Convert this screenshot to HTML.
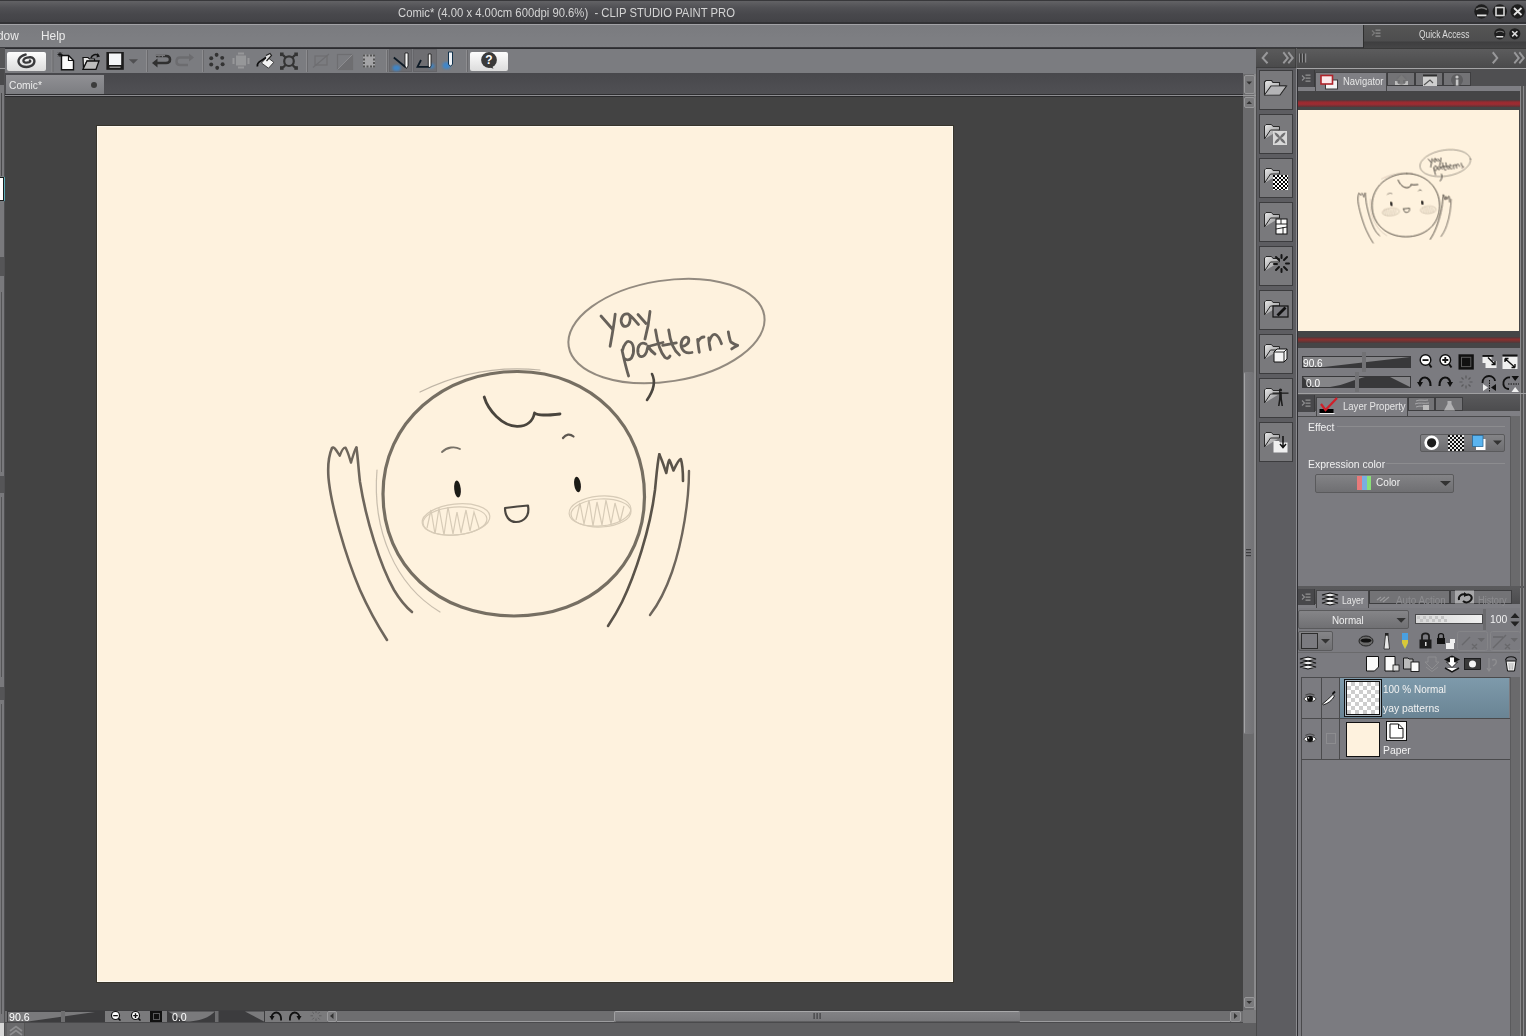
<!DOCTYPE html>
<html><head><meta charset="utf-8">
<style>
*{margin:0;padding:0;box-sizing:border-box}
html,body{width:1526px;height:1036px;overflow:hidden;background:#5e5e60;font-family:"Liberation Sans",sans-serif;position:relative}
.a{position:absolute}
.t{position:absolute;white-space:nowrap;line-height:1;transform-origin:0 0}
#title{left:0;top:0;width:1526px;height:24px;background:linear-gradient(#38383b 0,#38383b 1px,#626265 1px,#505054 8px,#48484c 14px,#434347 22px,#333336 22px)}
#menu{left:0;top:24px;width:1526px;height:24px;background:linear-gradient(#7a7b7f,#7f8084);border-top:1px solid #a2a2a6;border-bottom:1px solid #3a3a3e}
#tool{left:5px;top:48px;width:1251px;height:26px;background:#7b7c80;border-top:1px solid #2c2c30}
#tabrow{left:5px;top:73px;width:1238px;height:24px;background:linear-gradient(#48484c 0,#505054 21px,#2e2e30 21px,#2e2e30 22px,#8e8e92 22px,#8e8e92 23px,#2a2a2c 23px)}
#canvas{left:5px;top:97px;width:1238px;height:913px;background:#434343}
#paper{left:97px;top:126px;width:856px;height:856px;background:#fef2de;box-shadow:inset 1px 1px 0 #fffaf0,inset -1px -1px 0 #fffaf0,0 0 0 1px #38352c}
#leftstrip{left:0;top:48px;width:5px;height:988px;background:#79797c;border-right:1px solid #505052}
#vscroll{left:1243px;top:74px;width:13px;height:949px;background:#717173}
#hbar{left:5px;top:1010px;width:1251px;height:13px;background:#6a6a6c}
#bot{left:5px;top:1023px;width:1251px;height:13px;background:#5e5e60}
#col{left:1256px;top:48px;width:41px;height:988px;background:#5d5d61;border-left:1px solid #4a4a4b}
#rpanel{left:1296px;top:48px;width:230px;height:988px;background:#7b7b80;box-shadow:inset 1px 0 0 #8a8a8e,inset 2px 0 0 #2e2e32}
#qa{left:1363px;top:25px;width:163px;height:23px;background:linear-gradient(#555 0,#4d4d4e 16px,#3e3e3f 17px,#454546 23px);border-left:1px solid #2e2e2e}
.btn{background:linear-gradient(#fdfdfd,#e9e9e9 60%,#dcdcdc);border-radius:2px}
</style></head><body>
<div id="title" class="a"></div>
<div class="t" style="left:398px;top:7.2px;font-size:12.7px;color:#d4d4d4;transform:scaleX(0.89)">Comic* (4.00 x 4.00cm 600dpi 90.6%)&nbsp; - CLIP STUDIO PAINT PRO</div>
<div id="menu" class="a"></div>
<div class="t" style="left:-2.7px;top:29px;font-size:13px;color:#eaeaea;transform:scaleX(0.914)">dow</div>
<div class="t" style="left:40.5px;top:29px;font-size:13px;color:#eaeaea;transform:scaleX(0.914)">Help</div>
<div id="qa" class="a"></div>
<div class="t" style="left:1419px;top:30px;font-size:10px;color:#dcdcdc;transform:scaleX(0.84)">Quick Access</div>
<div id="leftstrip" class="a"></div>
<div class="a" style="left:0;top:48px;width:5px;height:20px;background:#555557"></div>
<div class="a" style="left:0;top:68px;width:5px;height:1px;background:#9a9a9c"></div>
<div class="a" style="left:0;top:69px;width:4px;height:16px;background:#4a4a4c"></div>
<div class="a" style="left:1px;top:93px;width:1px;height:83px;background:#4a4a4c"></div>
<div class="a" style="left:0;top:177px;width:4px;height:24px;background:#fff;border:1px solid #1a1a1a;border-left:none;box-shadow:1px 0 1px #5ab4c0"></div>
<div class="a" style="left:0;top:257px;width:4px;height:19px;background:#555557"></div>
<div class="a" style="left:1px;top:292px;width:1px;height:180px;background:#555557"></div>
<div class="a" style="left:0;top:476px;width:4px;height:17px;background:#555557"></div>
<div class="a" style="left:1px;top:497px;width:1px;height:180px;background:#555557"></div>
<div class="a" style="left:0;top:687px;width:4px;height:13px;background:#555557"></div>
<div class="a" style="left:1px;top:704px;width:1px;height:310px;background:#555557"></div>
<div class="a" style="left:0;top:1023px;width:4px;height:13px;background:#d8d8d8"></div>

<div id="tool" class="a"></div>
<div class="a btn" style="left:7px;top:52px;width:39px;height:19px"></div>
<div class="a btn" style="left:470px;top:52px;width:38px;height:19px"></div>
<div class="a" style="left:389px;top:49px;width:23px;height:23px;background:#6e6e72;border:1px solid #66666a"></div>
<div class="a" style="left:413px;top:49px;width:24px;height:23px;background:#6e6e72;border:1px solid #66666a"></div>
<div id="tabrow" class="a"></div>
<div id="canvas" class="a"></div>
<!-- tab -->
<div class="a" style="left:6px;top:75px;width:98px;height:19px;background:linear-gradient(#909094,#7c7d81)"></div>
<div class="t" style="left:9px;top:80px;font-size:11px;color:#ececec;transform:scaleX(0.93)">Comic*</div>
<div class="a" style="left:91px;top:81.5px;width:6px;height:6px;border-radius:50%;background:#3c3c3c"></div>

<div id="paper" class="a"></div>




<!-- bottom status bar -->
<div class="a" style="left:5px;top:1010px;width:1238px;height:13px;background:#6e6e70;border-top:1px solid #3e3e40;border-bottom:1px solid #4a4a4c"></div>
<div class="a" style="left:337px;top:1021px;width:277px;height:1px;background:#9c9c9e"></div>
<div class="a" style="left:1020px;top:1021px;width:210px;height:1px;background:#9c9c9e"></div>
<div class="a" style="left:614px;top:1011px;width:406px;height:11px;background:linear-gradient(#a8a8aa 0,#a8a8aa 1px,#828285 1px,#78787b 10px,#5e5e60 10px);border-left:1px solid #a0a0a2;border-radius:2px"></div>
<div class="a" style="left:7px;top:1011px;width:98px;height:11px;background:#3c3c3e"></div>
<div class="a" style="left:105px;top:1011px;width:45px;height:11px;background:#7a7a7c"></div>
<div class="a" style="left:150px;top:1011px;width:12px;height:11px;background:#111"></div>
<div class="a" style="left:153px;top:1013px;width:7px;height:7px;border:1px solid #5a5a5c"></div>
<div class="a" style="left:162px;top:1011px;width:5px;height:11px;background:#7a7a7c"></div>
<div class="a" style="left:167px;top:1011px;width:98px;height:11px;background:#3c3c3e"></div>
<div class="a" style="left:265px;top:1011px;width:62px;height:11px;background:#7a7a7c"></div>
<div class="a" style="left:327px;top:1011px;width:10px;height:11px;background:#7e7e80;border:1px solid #9a9a9c;border-radius:2px"></div>
<div class="a" style="left:1230px;top:1011px;width:11px;height:11px;background:#7e7e80;border:1px solid #9a9a9c;border-radius:2px"></div>
<div class="a" style="left:1243px;top:1010px;width:13px;height:13px;background:#7a7a7c"></div>
<div class="a" style="left:5px;top:1023px;width:1251px;height:13px;background:#5f5f61"></div>
<div class="a" style="left:7px;top:1023px;width:18px;height:13px;background:#6a6a6c;border-right:1px solid #555"></div>
<!-- vertical scrollbar -->
<div class="a" style="left:1243px;top:74px;width:13px;height:936px;background:#6b6b6d;border-right:2px solid #8a8a8c"></div>
<div class="a" style="left:1243px;top:95px;width:13px;height:1px;background:#9a9a9c"></div>
<div class="a" style="left:1244px;top:75px;width:11px;height:19px;background:#7a7a7c;border:1px solid #98989a;border-radius:2px"></div>
<div class="a" style="left:1244px;top:97px;width:11px;height:11px;background:#7a7a7c;border:1px solid #98989a;border-radius:2px"></div>
<div class="a" style="left:1244px;top:997px;width:11px;height:11px;background:#7a7a7c;border:1px solid #98989a;border-radius:2px"></div>
<div class="a" style="left:1244px;top:372px;width:10px;height:362px;background:linear-gradient(90deg,#a4a4a6 0,#a4a4a6 1px,#7c7c7f 1px,#747477 9px);border-radius:2px"></div>
<div class="a" style="left:1256px;top:74px;width:1px;height:962px;background:#3a3a3c"></div>
<div id="col" class="a"></div>
<div id="rpanel" class="a"></div>
<!-- right icon column -->
<div class="a" style="left:1256px;top:48px;width:40px;height:20px;background:linear-gradient(#5a5a5b,#4b4b4c);border-top:1px solid #3a3a3a;border-bottom:1px solid #3e3e3f"></div>


<div class="a" style="left:1297px;top:48px;width:229px;height:20px;background:linear-gradient(#5c5c5d,#4a4a4b);border-top:1px solid #3a3a3a"></div>
<div class="a" style="left:1297px;top:68px;width:229px;height:1px;background:#a4a4a6"></div>



<div class="a" style="left:1259px;top:70px;width:34px;height:40px;background:#79797c;border:1px solid #3c3c3e"></div>
<div class="a" style="left:1259px;top:114px;width:34px;height:40px;background:#79797c;border:1px solid #3c3c3e"></div>
<div class="a" style="left:1259px;top:158px;width:34px;height:40px;background:#79797c;border:1px solid #3c3c3e"></div>
<div class="a" style="left:1259px;top:202px;width:34px;height:40px;background:#79797c;border:1px solid #3c3c3e"></div>
<div class="a" style="left:1259px;top:246px;width:34px;height:40px;background:#79797c;border:1px solid #3c3c3e"></div>
<div class="a" style="left:1259px;top:290px;width:34px;height:40px;background:#79797c;border:1px solid #3c3c3e"></div>
<div class="a" style="left:1259px;top:334px;width:34px;height:40px;background:#79797c;border:1px solid #3c3c3e"></div>
<div class="a" style="left:1259px;top:378px;width:34px;height:40px;background:#79797c;border:1px solid #3c3c3e"></div>
<div class="a" style="left:1259px;top:422px;width:34px;height:40px;background:#79797c;border:1px solid #3c3c3e"></div>

<!-- right panel -->
<div class="a" style="left:1297px;top:69px;width:229px;height:17px;background:#4f4f51"></div>
<div class="a" style="left:1297px;top:86px;width:229px;height:5px;background:#7f7f84"></div>
<div class="a" style="left:1298px;top:70px;width:17px;height:17px;background:#48484b;border-right:1px solid #3a3a3c"></div>
<div class="a" style="left:1315px;top:72px;width:72px;height:19px;background:#7f7f84;border:1px solid #454547;border-bottom:none"></div>
<div class="a" style="left:1387px;top:72px;width:28px;height:14px;background:#737376;border:1px solid #3e3e40"></div>
<div class="a" style="left:1415px;top:72px;width:28px;height:14px;background:#737376;border:1px solid #3e3e40"></div>
<div class="a" style="left:1443px;top:72px;width:28px;height:14px;background:#737376;border:1px solid #3e3e40"></div>
<div class="t" style="left:1342.8px;top:77px;font-size:10px;color:#e6e6e6;transform:scaleX(0.946)">Navigator</div>
<div class="a" style="left:1297px;top:91px;width:223px;height:257px;background:#454546"></div>
<div class="a" style="left:1297px;top:100px;width:223px;height:7px;background:linear-gradient(#4a3a3c,#9a2a30 30%,#9e2c32 60%,#5a3436)"></div>
<div class="a" style="left:1297px;top:337px;width:223px;height:6px;background:linear-gradient(#4a3a3c,#8a3030 40%,#7a3230 60%,#4a3a3c)"></div>
<div class="a" style="left:1298px;top:110px;width:221px;height:221px;background:#fef2de"></div>
<div class="a" style="left:1520px;top:86px;width:6px;height:950px;background:linear-gradient(90deg,#8a8a8c 0,#8a8a8c 1px,#555 1px,#555 3px,#8a8a8c 3px,#8a8a8c 4px,#5a5a5c 4px)"></div>
<!-- nav controls -->
<div class="a" style="left:1297px;top:348px;width:223px;height:45px;background:#7b7b80"></div>
<div class="a" style="left:1302px;top:356px;width:109px;height:12px;background:#38383a"></div>
<div class="a" style="left:1302px;top:376px;width:109px;height:12px;background:#38383a"></div>
<div class="a" style="left:1297px;top:393px;width:229px;height:1px;background:#a0a0a2"></div>
<!-- layer property tabs -->
<div class="a" style="left:1297px;top:394px;width:223px;height:17px;background:linear-gradient(#5a5a5c,#4c4c4e)"></div>
<div class="a" style="left:1297px;top:411px;width:223px;height:5px;background:#7f7f84"></div>
<div class="a" style="left:1298px;top:395px;width:17px;height:17px;background:#48484b;border-right:1px solid #3a3a3c"></div>
<div class="a" style="left:1316px;top:397px;width:92px;height:19px;background:#7f7f84;border:1px solid #454547;border-bottom:none"></div>
<div class="a" style="left:1408px;top:397px;width:27px;height:14px;background:#737376;border:1px solid #3e3e40"></div>
<div class="a" style="left:1435px;top:397px;width:28px;height:14px;background:#737376;border:1px solid #3e3e40"></div>
<div class="t" style="left:1342.5px;top:402px;font-size:10px;color:#e6e6e6;transform:scaleX(0.955)">Layer Property</div>
<div class="a" style="left:1298px;top:416px;width:212px;height:170px;background:#7b7b80;border-top:1px solid #4a4a4c"></div>
<div class="a" style="left:1510px;top:416px;width:10px;height:170px;background:#6a6a6c;border-left:1px solid #5a5a5c"></div>
<div class="t" style="left:1307.5px;top:420.5px;font-size:11.6px;color:#f0f0f0;transform:scaleX(0.9)">Effect</div>
<div class="a" style="left:1337px;top:426px;width:168px;height:1px;background:#8c8c8f"></div>
<div class="a" style="left:1420px;top:434px;width:85px;height:18px;background:linear-gradient(#848487,#6e6e71);border:1px solid #5a5a5c;border-radius:2px"></div>
<div class="t" style="left:1307.5px;top:457.5px;font-size:11.6px;color:#f0f0f0;transform:scaleX(0.9)">Expression color</div>
<div class="a" style="left:1386px;top:463px;width:119px;height:1px;background:#8c8c8f"></div>
<div class="a" style="left:1315px;top:474px;width:139px;height:19px;background:linear-gradient(#838386,#6f6f72);border:1px solid #5a5a5c;border-radius:2px"></div>
<div class="a" style="left:1357px;top:476px;width:5px;height:14px;background:#e87a7a"></div>
<div class="a" style="left:1362px;top:476px;width:5px;height:14px;background:#7aaee0"></div>
<div class="a" style="left:1367px;top:476px;width:4px;height:14px;background:#8ae07a"></div>
<div class="t" style="left:1376px;top:477px;font-size:11px;color:#f0f0f0;transform:scaleX(0.916)">Color</div>
<div class="a" style="left:1297px;top:586px;width:229px;height:2px;background:#5a5a5c"></div>
<!-- layer tabs -->
<div class="a" style="left:1297px;top:588px;width:223px;height:16px;background:linear-gradient(#5a5a5c,#4c4c4e)"></div>
<div class="a" style="left:1297px;top:604px;width:223px;height:4px;background:#7f7f84"></div>
<div class="a" style="left:1298px;top:589px;width:17px;height:16px;background:#48484b;border-right:1px solid #3a3a3c"></div>
<div class="a" style="left:1316px;top:590px;width:53px;height:18px;background:#7f7f84;border:1px solid #454547;border-bottom:none"></div>
<div class="a" style="left:1369px;top:590px;width:81px;height:14px;background:#737376;border:1px solid #3e3e40"></div>
<div class="a" style="left:1450px;top:590px;width:62px;height:14px;background:#737376;border:1px solid #3e3e40"></div>
<div class="t" style="left:1342px;top:596px;font-size:10px;color:#e6e6e6;transform:scaleX(0.876)">Layer</div>
<div class="t" style="left:1396px;top:596px;font-size:10px;color:#8c8c8f;transform:scaleX(0.984)">Auto Action</div>
<div class="t" style="left:1478px;top:596px;font-size:10px;color:#8c8c8f;transform:scaleX(0.92)">History</div>
<div class="a" style="left:1298px;top:610px;width:111px;height:19px;background:linear-gradient(#858588,#707073);border:1px solid #5a5a5c;border-radius:2px"></div>
<div class="t" style="left:1331.5px;top:613.5px;font-size:11.6px;color:#f0f0f0;transform:scaleX(0.85)">Normal</div>
<div class="a" style="left:1415px;top:614px;width:68px;height:10px;background:linear-gradient(90deg,#d8d8d8,#f0f0f0);border:1px solid #4a4a4c"></div>
<div class="a" style="left:1483px;top:609px;width:3px;height:21px;background:#6a6a6d"></div>
<div class="t" style="left:1490px;top:614px;font-size:11px;color:#f0f0f0;transform:scaleX(0.946)">100</div>
<div class="a" style="left:1298px;top:631px;width:35px;height:20px;background:linear-gradient(#858588,#707073);border:1px solid #5a5a5c;border-radius:2px"></div>
<div class="a" style="left:1301px;top:633px;width:17px;height:16px;background:#7b7b80;border:1.5px solid #2c2c2c"></div>
<div class="a" style="left:1297px;top:652px;width:223px;height:1px;background:#6a6a6c"></div>
<!-- layer list -->
<div class="a" style="left:1301px;top:677px;width:209px;height:359px;background:#7b7b80;border-left:1px solid #4a4a4c;border-top:1px solid #4a4a4c"></div>
<div class="a" style="left:1510px;top:677px;width:10px;height:359px;background:#6a6a6c;border-left:1px solid #5a5a5c"></div>
<div class="a" style="left:1321px;top:677px;width:1px;height:82px;background:#4a4a4c"></div>
<div class="a" style="left:1339px;top:677px;width:1px;height:82px;background:#4a4a4c"></div>
<div class="a" style="left:1340px;top:678px;width:169px;height:40px;background:linear-gradient(#7e9aab,#6a8494)"></div>
<div class="a" style="left:1301px;top:718px;width:209px;height:1px;background:#4a4a4c"></div>
<div class="a" style="left:1301px;top:759px;width:209px;height:1px;background:#4a4a4c"></div>
<div class="a" style="left:1344px;top:679px;width:38px;height:38px;border:1px solid #111;background:#a8b6c0"></div>
<div class="a" style="left:1346px;top:681px;width:34px;height:34px;background-color:#fff;background-image:linear-gradient(45deg,#cdcdcd 25%,transparent 25%,transparent 75%,#cdcdcd 75%),linear-gradient(45deg,#cdcdcd 25%,transparent 25%,transparent 75%,#cdcdcd 75%);background-size:8px 8px;background-position:0 0,4px 4px;border:1px solid #111"></div>
<div class="t" style="left:1383px;top:684px;font-size:11.5px;color:#f2f2f2;transform:scaleX(0.865)">100 % Normal</div>
<div class="t" style="left:1383px;top:703.2px;font-size:11.5px;color:#f2f2f2;transform:scaleX(0.9)">yay patterns</div>
<div class="a" style="left:1346px;top:722px;width:34px;height:35px;background:#fef2de;border:1px solid #111"></div>
<div class="a" style="left:1386px;top:721px;width:21px;height:20px;background:#fafafa;border:1.5px solid #111"></div>
<div class="t" style="left:1383px;top:744.5px;font-size:11.5px;color:#f2f2f2;transform:scaleX(0.9)">Paper</div>
<div class="a" style="left:1326px;top:733px;width:10px;height:11px;border:1px solid #8c8c8f"></div>


<div class="a" style="left:1296px;top:69px;width:1px;height:967px;background:#8a8a8e"></div><div class="a" style="left:1297px;top:69px;width:1px;height:967px;background:#2e2e32"></div>
<svg class="a" style="left:0;top:0" width="1526" height="1036" viewBox="0 0 1526 1036">

<!-- sketch -->
<defs><filter id="soft" x="-5%" y="-5%" width="110%" height="110%"><feGaussianBlur stdDeviation="0.4"/></filter></defs>
<g id="sk" filter="url(#soft)">
<g fill="none" stroke="#4b4640" stroke-linecap="round" stroke-linejoin="round">
 <path d="M518 371.5 C592 372 645 427 644.5 497 C644 567 590 616 514 616 C438 616 383 566 383 494 C383 422 444 371 518 371.5" stroke="#5e574d" stroke-width="3.2" opacity="0.85"/>
 <path d="M420 392 C460 372 500 366 540 370" stroke-width="1.2" opacity="0.35"/>
 <path d="M377 470 C372 530 395 585 440 612" stroke-width="1.2" opacity="0.3"/>
 <path d="M484.2 397 C488 410 502 426 517 426.3 C527 426.5 533 421 534.5 413 C538 416 546 415.5 560 414" stroke-width="2.8" stroke="#4a443c"/>
 <path d="M442 452 C447 447 455 446 460 449" stroke-width="1.8" opacity="0.75"/>
 <path d="M563 438 C566 434 570 433.5 573.5 436.5" stroke-width="2.2" opacity="0.9"/>
 <path d="M505 508 C512 507 520 506 528 505.5 C530 516 524 522 516 522 C509 522 505 516 505 508" stroke-width="2.2"/>
 <path d="M332 448 C329 455 327.5 465 328.5 478 C331 505 345 555 360 590 C368 608 378 626 387 640" stroke="#6e665c" stroke-width="2.6"/>
 <path d="M356.4 447.5 C358 458 358.5 470 360 482 C366 520 380 565 394 590 C400 600 406 607 412 612" stroke="#6e665c" stroke-width="2.6"/>
 <path d="M332 448 C334 446 336 450 339.7 455.7 C341.5 451 343.5 447 345.5 447.7 C348 452 349.5 458 351 462.6 C353 456 354.5 450 356.4 447.5" stroke="#6e665c" stroke-width="2.4"/>
 <path d="M659.3 454.3 C662 460 664.5 468 666.3 473 C667.5 467 668 461 669.3 460 C671 463 672.5 468 673.5 470.5 C676 465 678.5 459.5 680.8 459 C682.5 464 683 472 683 481" stroke="#5a534a" stroke-width="2.6"/>
 <path d="M659.3 454.3 C657.5 462 656.5 475 655 490 C650 530 635 575 622 602 C617 612 612 620 608 626" stroke="#5a534a" stroke-width="2.6"/>
 <path d="M689 471 C689 500 683 540 672 572 C665 592 657 606 650 615" stroke="#6e665c" stroke-width="2.4"/>
 <ellipse cx="666.5" cy="331" rx="99" ry="50.5" transform="rotate(-9 666.5 331)" stroke-width="2" opacity="0.6"/>
 <path d="M652 374 C656 382 654 390 647 400" stroke-width="2.6"/>
</g>
<g fill="none" stroke="#b0a490" stroke-width="1.2" opacity="0.5">
 <ellipse cx="456" cy="519.5" rx="34" ry="15.5" transform="rotate(-6 456 519.5)"/>
 <path d="M427 528 L431 510 L435 534 L439 508 L444 535 L448 507 L453 534 L457 512 L461 533 L466 510 L470 531 L474 512 L479 528"/><ellipse cx="455" cy="521" rx="32" ry="14" transform="rotate(-4 455 521)"/>
 <ellipse cx="600" cy="511" rx="31" ry="15" transform="rotate(-5 600 511)"/>
 <path d="M576 520 L580 503 L584 524 L589 500 L593 526 L597 502 L602 525 L606 500 L611 524 L615 503 L620 522 L624 506"/><ellipse cx="601" cy="513" rx="30" ry="14" transform="rotate(-3 601 513)"/>
</g>
<g fill="#1e1b18">
 <ellipse cx="457.5" cy="489" rx="3.3" ry="8.6" transform="rotate(-6 457.5 489)"/>
 <ellipse cx="577.5" cy="484.5" rx="3.3" ry="7.8" transform="rotate(-8 577.5 484.5)"/>
</g>
<g fill="none" stroke="#4d4842" stroke-width="2.8" stroke-linecap="round" stroke-linejoin="round" opacity="0.85">
 <path d="M601 316 L612.4 329"/><path d="M615.2 314.2 C614 325 612 336 610.1 346.3"/>
 <path d="M628 314 C622 313 620 320 622 324 C624 328 629 327 630 321 C631 317 629 314 628 314 C632 316 635 321 638.5 324.5"/>
 <path d="M638 314.5 L646 323.5"/><path d="M650 311.5 C649 322 647 332 645 339"/>
 <path d="M622 350 C624 359 626 368 628.6 376"/>
 <path d="M622.7 349.7 C624 344 627 341 629 341.5 C634 342.5 635 352 631.5 358 C629 361 626 360 624.4 358.5"/>
 <path d="M646 344 C640 341 637 347 638 353 C639 358 644 358 646.5 352 L648 346 C650 350 652 352 655 354"/>
 <path d="M655.5 330 C657 340 660 352 665 357.5 C667 359 669 358 670 356"/>
 <path d="M650 346 L663 342.5"/>
 <path d="M668.7 330 C670 340 673 350 679.5 355"/>
 <path d="M662.7 345.4 L676.3 342.9"/>
 <path d="M681.5 346.5 C686 346 690 343 688.5 338.5 C686.5 335 681 338 681 345 C681.5 351 686 354 692 352.5"/>
 <path d="M697.6 339.5 C698 344 698.5 348 699.3 352.3 M698 342 C699.5 338.5 701.5 337 704 337"/>
 <path d="M708.7 337.8 C709 342 709.5 346 710.4 349.7 M709.5 341 C711 336 713.5 334 715.5 334.5 C718 335.5 720 339.5 721.5 343.7"/>
 <path d="M728.3 331.8 C729 336 729.5 339 730.8 342 C733 343.5 736 345 737.7 345.4 C735.5 346.5 733.5 347.5 731.7 348.9"/>
</g>

</g>
<g transform="translate(1298 110) scale(0.2583) translate(-97 -126)"><use href="#sk"/><use href="#sk" x="1.6" y="1.2" opacity="0.7"/></g>
<!-- window buttons -->
<g>
 <circle cx="1481.5" cy="11.5" r="7.2" fill="#1e1e1e"/>
 <path d="M1476 9.5 Q1481.5 6 1487 9.5" stroke="#777" stroke-width="1.5" fill="none"/>
 <rect x="1477" y="14.5" width="9.5" height="1.8" fill="#e0e0e0"/>
 <circle cx="1499.8" cy="11.5" r="7.2" fill="#1e1e1e"/>
 <rect x="1496" y="7.5" width="8" height="8" fill="none" stroke="#d8d8d8" stroke-width="1.6"/>
 <circle cx="1517.6" cy="11.5" r="7.2" fill="#1e1e1e"/>
 <path d="M1514 8 L1521.5 15 M1521.5 8 L1514 15" stroke="#e4e4e4" stroke-width="1.8"/>
 <circle cx="1499.8" cy="33.8" r="5.6" fill="#1e1e1e"/>
 <rect x="1496.3" y="36" width="7" height="1.5" fill="#ddd"/>
 <path d="M1496 32.5 Q1500 30 1504 32.5" stroke="#777" stroke-width="1.2" fill="none"/>
 <circle cx="1514.8" cy="33.8" r="5.6" fill="#1e1e1e"/>
 <path d="M1512.2 31.2 L1517.4 36.4 M1517.4 31.2 L1512.2 36.4" stroke="#e0e0e0" stroke-width="1.5"/>
 <!-- QA menu icon -->
 <path d="M1372 30.5 L1374.5 33 L1372 35.5" stroke="#7a7a7a" stroke-width="1.2" fill="none"/>
 <rect x="1375.5" y="29.5" width="5" height="1.3" fill="#8a8a8a"/><rect x="1375.5" y="32.5" width="5" height="1.3" fill="#8a8a8a"/><rect x="1375.5" y="35.5" width="5" height="1.3" fill="#8a8a8a"/>
</g>
<!-- toolbar separators -->
<g fill="#8d8d90">
 <rect x="51.5" y="50" width="1" height="22"/><rect x="146" y="50" width="1" height="22"/><rect x="202" y="50" width="1" height="22"/>
 <rect x="306" y="50" width="1" height="22"/><rect x="386" y="50" width="1" height="22"/><rect x="466" y="50" width="1" height="22"/>
</g>
<g fill="#6a6a6d">
 <rect x="52.5" y="50" width="1" height="22"/><rect x="147" y="50" width="1" height="22"/><rect x="203" y="50" width="1" height="22"/>
 <rect x="307" y="50" width="1" height="22"/><rect x="387" y="50" width="1" height="22"/><rect x="467" y="50" width="1" height="22"/>
</g>
<!-- logo spiral -->
<path d="M25.6 54.6 C25.0 54.8 23.0 55.4 22.0 56.0 C21.0 56.6 20.0 57.4 19.4 58.3 C18.8 59.2 18.5 60.2 18.5 61.2 C18.5 62.2 18.9 63.4 19.6 64.3 C20.3 65.2 21.4 66.0 22.5 66.4 C23.6 66.9 25.2 67.0 26.5 67.0 C27.8 67.0 29.3 66.7 30.5 66.2 C31.7 65.7 32.9 64.9 33.5 64.0 C34.1 63.1 34.4 62.0 34.4 61.0 C34.4 60.0 33.9 58.9 33.2 58.3 C32.6 57.7 31.5 57.4 30.5 57.3 C29.5 57.2 28.2 57.4 27.2 57.6 C26.2 57.8 25.2 58.2 24.6 58.7 C24.0 59.2 23.4 60.2 23.4 60.8 C23.4 61.4 23.8 61.9 24.4 62.2 C25.0 62.5 26.0 62.6 26.8 62.6 C27.6 62.6 28.7 62.4 29.3 62.2 C29.9 62.0 30.2 61.5 30.3 61.2 C30.4 60.9 30.0 60.6 29.9 60.5" stroke="#3a3a3c" stroke-width="2.4" fill="none" stroke-linecap="round"/>
<!-- new doc -->
<path d="M61.5 55.5 L68.5 55.5 L73.5 60.5 L73.5 69.8 L61.5 69.8 Z" fill="#fafafa" stroke="#111" stroke-width="1.4"/>
<path d="M68.5 55.5 L68.5 60.5 L73.5 60.5" fill="none" stroke="#111" stroke-width="1.2"/>
<path d="M60 52 L60 57 M57.5 54.5 L62.5 54.5 M58.2 52.7 L61.8 56.3 M61.8 52.7 L58.2 56.3" stroke="#111" stroke-width="0.9"/>
<!-- open folder -->
<path d="M83 57.5 L88 57.5 L89.5 59 L94.5 59 L94.5 61 L87 61 L83.5 68.5 Z" fill="#e8e8e8" stroke="#111" stroke-width="1.2"/>
<path d="M87 61 L99 61 L96 69.3 L83 69.3 Z" fill="#bdbdbd" stroke="#111" stroke-width="1.3"/>
<path d="M91 58 C92 54.5 96 53.5 98.5 55.5" stroke="#111" stroke-width="1.6" fill="none"/>
<path d="M97.5 53 L100 56.5 L96.5 57.5 Z" fill="#111"/>
<!-- save -->
<rect x="106.4" y="52" width="17.4" height="17.8" fill="#1c1c1c"/>
<rect x="109" y="53.5" width="12.2" height="11.5" fill="#f4f6f8"/>
<rect x="109.5" y="66.5" width="11" height="1.5" fill="#8a8a8a"/>
<path d="M128.8 59.3 L138 59.3 L133.4 63.8 Z" fill="#505052"/>
<!-- undo -->
<path d="M156 56 L166 56 C169.5 56 170 58 170 59.5 C170 62 168.5 63 166 63 L156 63" stroke="#303030" stroke-width="2.6" fill="none"/>
<path d="M152 63 L157.5 58.5 L157.5 67.5 Z" fill="#303030"/>
<rect x="155" y="54.5" width="10" height="1.6" fill="#767679"/>
<rect x="158.5" y="54.5" width="1" height="3" fill="#767679"/><rect x="162" y="54.5" width="1" height="3" fill="#767679"/>
<!-- redo disabled -->
<path d="M190 57.5 L180 57.5 C177 57.5 176.5 59.5 176.5 61.5 C176.5 64 178 65 180 65 L188 65" stroke="#6c6c6f" stroke-width="2.4" fill="none"/>
<path d="M194 57.5 L189 53.5 L189 61.5 Z" fill="#6c6c6f"/>
<!-- dots -->
<g fill="#333">
 <ellipse cx="216.6" cy="54.8" rx="1.9" ry="2.1"/><ellipse cx="222.2" cy="57.8" rx="2" ry="1.9"/><ellipse cx="222.6" cy="64.3" rx="2" ry="2"/>
 <ellipse cx="217.2" cy="67.8" rx="1.9" ry="2.1"/><ellipse cx="211.2" cy="64.5" rx="2" ry="1.9"/><ellipse cx="211.2" cy="58.2" rx="2" ry="2"/>
</g>
<!-- disabled select -->
<g fill="#9a9a9c" opacity="0.9">
 <rect x="236" y="55.5" width="10" height="10"/>
 <rect x="238" y="52.5" width="6" height="2"/><rect x="238" y="66.5" width="6" height="2"/>
 <rect x="232.5" y="58" width="2" height="6"/><rect x="247.5" y="58" width="2" height="6"/>
</g>
<!-- bucket -->
<path d="M267 57 L273.8 62.3 L268.5 68.2 L261.5 63 Z" fill="#f4f4f4" stroke="#222" stroke-width="0.8"/>
<path d="M266 57.5 L261.5 60.5 C258.5 62 257 64.5 257.5 66.5" stroke="#111" stroke-width="1.8" fill="none"/>
<path d="M266 55.5 L270 53.5 L271.5 55.5 L266.5 61" stroke="#222" stroke-width="1.2" fill="#e4e4e4"/>
<!-- transform -->
<g stroke="#343434" fill="none" stroke-width="2.2">
 <circle cx="289" cy="61.2" r="4.8"/>
 <path d="M283 55 L285.5 57.6 M295 55 L292.5 57.6 M283 67.5 L285.5 65 M295 67.5 L292.5 65"/>
</g>
<g fill="#343434"><rect x="280" y="52.5" width="3.6" height="3.6"/><rect x="294.3" y="52.5" width="3.6" height="3.6"/><rect x="280" y="66.2" width="3.6" height="3.6"/><rect x="294.3" y="66.2" width="3.6" height="3.6"/></g>
<!-- disabled icons -->
<g stroke="#6e6e71" fill="none" stroke-width="1.2">
 <rect x="315" y="56" width="12" height="9"/><path d="M313 67.5 L329 54"/>
 <rect x="337.5" y="54.5" width="15" height="15"/>
</g>
<path d="M352.5 54.5 L352.5 69.5 L337.5 69.5 Z" fill="#6e6e71"/>
<path d="M337.5 69.5 L352.5 54.5" stroke="#8c8c8f" stroke-width="1"/>
<rect x="363" y="54.5" width="12" height="13" fill="#a4a4a6"/>
<g fill="#555"><rect x="363" y="54.5" width="2" height="2"/><rect x="366.5" y="54.5" width="2" height="2"/><rect x="370" y="54.5" width="2" height="2"/><rect x="373" y="54.5" width="2" height="2"/>
<rect x="363" y="58.5" width="2" height="2"/><rect x="373" y="58.5" width="2" height="2"/><rect x="363" y="62" width="2" height="2"/><rect x="373" y="62" width="2" height="2"/>
<rect x="363" y="65.5" width="2" height="2"/><rect x="366.5" y="65.5" width="2" height="2"/><rect x="370" y="65.5" width="2" height="2"/><rect x="373" y="65.5" width="2" height="2"/></g>
<!-- pen tools -->
<defs><filter id="bl" x="-50%" y="-50%" width="200%" height="200%"><feGaussianBlur stdDeviation="1.3"/></filter></defs>
<ellipse cx="396.5" cy="68" rx="4" ry="3" fill="#3a88d0" opacity="0.9" filter="url(#bl)"/>
<path d="M393.8 57.5 L406 67.5" stroke="#0d1a26" stroke-width="1.8"/>
<path d="M405 53 L408 53 L408 66 L406.5 68.5 L405 66 Z" fill="#fafafa" stroke="#111" stroke-width="0.8"/>
<ellipse cx="431.5" cy="66" rx="3" ry="2.5" fill="#3a88d0" opacity="0.8" filter="url(#bl)"/>
<path d="M421 60 L417.5 66.8 L430 66.8" stroke="#0d1a26" stroke-width="1.8" fill="none"/>
<path d="M428.3 54 L431 54 L431 66 L429.6 68 L428.3 66 Z" fill="#fafafa" stroke="#111" stroke-width="0.8"/>
<ellipse cx="446.5" cy="65.5" rx="4" ry="3.5" fill="#3a88d0" opacity="0.9" filter="url(#bl)"/>
<path d="M448.5 52 L452.5 52 L452.5 64.5 L450.5 66 L448.5 64.5 Z" fill="#f0f4f8" stroke="#10304a" stroke-width="1"/>
<!-- help -->
<circle cx="489" cy="60" r="7.9" fill="#3a3a3a"/>
<path d="M486 66 L493.5 68.8 L491 64 Z" fill="#3a3a3a"/>
<text x="489" y="64.3" font-size="12" font-weight="bold" fill="#fff" text-anchor="middle" font-family="Liberation Sans">?</text>
</svg>

<svg class="a" style="left:0;top:0" width="1526" height="1036" viewBox="0 0 1526 1036">
<defs>
 <linearGradient id="fg" x1="0" y1="0" x2="1" y2="1"><stop offset="0" stop-color="#e8e8e8"/><stop offset="1" stop-color="#8a8a8c"/></linearGradient>
 <g id="fold">
  <path d="M1264.5 95 L1264.5 82 L1266 80.5 L1271.5 80.5 L1273 82.5 L1279.5 82.5 L1279.5 86" fill="url(#fg)" stroke="#2a2a2a" stroke-width="1"/>
  <path d="M1264.5 95 L1270.5 86 L1279.5 86" fill="none" stroke="#2a2a2a" stroke-width="1"/>
 </g>
</defs>
<!-- col button 1 open folder -->
<path d="M1264.5 95 L1264.5 82 L1266 80.5 L1271.5 80.5 L1273 82.5 L1279.5 82.5 L1279.5 86 L1286.5 86 L1280 95 Z" fill="url(#fg)" stroke="#262626" stroke-width="1.1"/>
<path d="M1264.5 95 L1271 86 L1286.5 86" fill="#b8b8ba" stroke="#262626" stroke-width="1.1"/>
<path d="M1265.5 94.5 L1271.5 86.8 L1285 86.8 L1279.5 94.5 Z" fill="#b4b4b6"/>
<!-- col buttons 2..9: folder + secondary -->
<use href="#fold" transform="translate(0 44)"/>
<rect x="1273" y="131" width="14" height="14" fill="#d8d8d8"/>
<path d="M1274.5 132.5 C1278 133 1280 136 1280 138 C1280 136 1282 133 1285.5 132.5 C1285 136 1282 138 1280 138 C1282 138 1285 140 1285.5 143.5 C1282 143 1280 140 1280 138 C1280 140 1278 143 1274.5 143.5 C1275 140 1278 138 1280 138 C1278 138 1275 136 1274.5 132.5 Z" fill="#707072"/>
<use href="#fold" transform="translate(0 88)"/>
<g fill="#000"><rect x="1273" y="175" width="15" height="15" fill="#fff"/>
<path d="M1273 175h2v2h-2zM1277 175h2v2h-2zM1281 175h2v2h-2zM1285 175h2v2h-2zM1275 177h2v2h-2zM1279 177h2v2h-2zM1283 177h2v2h-2zM1273 179h2v2h-2zM1277 179h2v2h-2zM1281 179h2v2h-2zM1285 179h2v2h-2zM1275 181h2v2h-2zM1279 181h2v2h-2zM1283 181h2v2h-2zM1273 183h2v2h-2zM1277 183h2v2h-2zM1281 183h2v2h-2zM1285 183h2v2h-2zM1275 185h2v2h-2zM1279 185h2v2h-2zM1283 185h2v2h-2zM1273 187h2v2h-2zM1277 187h2v2h-2zM1281 187h2v2h-2zM1285 187h2v2h-2zM1287 177h1v2h-1zM1287 181h1v2h-1zM1287 185h1v2h-1zM1275 189h2v1h-2zM1279 189h2v1h-2zM1283 189h2v1h-2z"/></g>
<use href="#fold" transform="translate(0 132)"/>
<rect x="1276" y="219" width="11" height="15" fill="#fafafa" stroke="#111" stroke-width="1"/>
<path d="M1276 224 L1287 224 M1281 219 L1281 224 M1276 229 L1287 227 M1283 227 L1283 234" stroke="#111" stroke-width="0.9"/>
<use href="#fold" transform="translate(0 176)"/>
<g stroke="#151515" stroke-width="2" stroke-linecap="round">
 <path d="M1276 257 L1279 260 M1287 257 L1284 260 M1276 270 L1279 267 M1287 270 L1284 267 M1274 264 L1277 264 M1289 263.5 L1286 263.5 M1281.5 255 L1281.5 258 M1281.5 272 L1281.5 269"/>
</g>
<use href="#fold" transform="translate(0 220)"/>
<rect x="1273" y="306" width="15" height="11" fill="#7b7b80" stroke="#111" stroke-width="1.2"/>
<path d="M1276.5 314.5 L1284.5 306.5 L1286.5 308.5 L1278.5 316.5 Z" fill="#111"/>
<use href="#fold" transform="translate(0 264)"/>
<path d="M1274 352 L1277 349 L1287 349 L1287 359 L1284 362 L1274 362 Z" fill="#f4f4f4" stroke="#111" stroke-width="1"/>
<path d="M1274 352 L1284 352 L1287 349 M1284 352 L1284 362" fill="none" stroke="#111" stroke-width="0.9"/>
<use href="#fold" transform="translate(0 308)"/>
<g fill="#1c1c1c"><circle cx="1280.5" cy="390" r="1.6"/><path d="M1279.3 392 L1281.7 392 L1282 399 L1283 406 L1281.5 406 L1280.5 400 L1279.5 406 L1278 406 L1279 399 Z"/><path d="M1272.5 392.5 L1288.5 392.5 L1288.5 393.8 L1272.5 393.8 Z"/></g>
<use href="#fold" transform="translate(0 352)"/>
<path d="M1273.5 441 L1279 441 L1280 442.5 L1287.5 442.5 L1287.5 452.5 L1273.5 452.5 Z" fill="#f0f0f0"/>
<path d="M1283 436 L1283 447 M1280 444 L1283 447.5 L1286 444" stroke="#111" stroke-width="1.5" fill="none"/>
</svg>

<svg class="a" style="left:0;top:0" width="1526" height="1036" viewBox="0 0 1526 1036">
<defs>
 <g id="menuic"><path d="M0 1.5 L2.5 4 L0 6.5" stroke="#8e8e90" stroke-width="1.1" fill="none"/><rect x="3.5" y="0.5" width="5" height="1.3" fill="#8e8e90"/><rect x="3.5" y="3.5" width="5" height="1.3" fill="#8e8e90"/><rect x="3.5" y="6.5" width="5" height="1.3" fill="#8e8e90"/></g>
 <g id="eye"><path d="M-6 0.5 C-5.5 -3 5.5 -3 6 0.5 C5 4 -5 4 -6 0.5 Z" fill="#f4f4f4" stroke="#333" stroke-width="0.9"/><path d="M-4.5 -3.2 C-2 -4.8 2 -4.8 4.5 -3.2" stroke="#444" stroke-width="1.1" fill="none"/><circle cx="0" cy="0.3" r="3" fill="#0a0a0a"/><circle cx="-1.4" cy="-0.8" r="0.8" fill="#ddd"/></g>
</defs>
<use href="#menuic" transform="translate(1302 74)"/>
<use href="#menuic" transform="translate(1302 399)"/>
<use href="#menuic" transform="translate(1302 593)"/>
<!-- navigator tab icon -->
<rect x="1325.5" y="80" width="12" height="9" fill="#f4f4f4" stroke="#3a3a3a" stroke-width="1"/>
<rect x="1321" y="75.5" width="11.5" height="8.5" fill="#fbe8ea" stroke="#b0232a" stroke-width="1.6"/>
<path d="M1395 85 L1395 81 L1398 81 L1398 83.5 L1405 83.5 L1405 81 L1408 81 L1408 85 Z" fill="#bdbdbd"/>
<path d="M1401.5 75 L1406 80 L1403 80 L1403 83 L1400 83 L1400 80 L1397 80 Z" fill="#8e8e90"/>
<circle cx="1401.5" cy="80" r="5" fill="#6e6e70" opacity="0.6"/>
<rect x="1423" y="76" width="14" height="10" fill="#cfcfcf"/><rect x="1423" y="74.5" width="14" height="2" fill="#2e2e2e"/>
<path d="M1424 85 L1430 80 L1433 83" stroke="#555" stroke-width="1.2" fill="none"/>
<circle cx="1457" cy="80" r="6" fill="#5e5e60"/>
<circle cx="1457" cy="77" r="1.6" fill="#c8c8c8"/><rect x="1455.8" y="79.5" width="2.6" height="6" fill="#c8c8c8"/>
<!-- nav sliders -->
<path d="M1303 357 L1410 357 L1324 367 L1303 367 Z" fill="#858588"/>
<text x="1303" y="367.5" font-size="11.5" fill="#fff" font-family="Liberation Sans" transform="translate(1303 0) scale(0.88 1) translate(-1303 0)">90.6</text>
<rect x="1362" y="352" width="4" height="20" fill="#717174"/>
<path d="M1303 377 L1400 377 L1410 377 L1410 387 L1330 387 C1340 385 1350 380 1360 377 L1345 377 Z" fill="none"/>
<path d="M1303 377 L1365 377 C1355 379 1345 385 1330 387 L1312 387 Z" fill="#858588"/>
<path d="M1390 377 L1410 377 L1410 387 Z" fill="#858588"/>
<text x="1306" y="387" font-size="11.5" fill="#fff" font-family="Liberation Sans" transform="translate(1306 0) scale(0.88 1) translate(-1306 0)">0.0</text>
<rect x="1355" y="372" width="4" height="20" fill="#717174"/>
<!-- nav controls icons -->
<g>
 <circle cx="1425.5" cy="360" r="5.3" fill="#fff" stroke="#111" stroke-width="1.4"/>
 <rect x="1422.5" y="359.2" width="6" height="1.8" fill="#111"/>
 <path d="M1429 364 L1431.5 367.5" stroke="#111" stroke-width="2"/>
 <circle cx="1445.3" cy="360" r="5.3" fill="#fff" stroke="#111" stroke-width="1.4"/>
 <path d="M1442.3 360 L1448.3 360 M1445.3 357 L1445.3 363" stroke="#111" stroke-width="1.8"/>
 <path d="M1449 364 L1451.5 367.5" stroke="#111" stroke-width="2"/>
 <rect x="1458.5" y="354.3" width="15.3" height="15.3" fill="#111"/>
 <rect x="1461.5" y="357.3" width="9.3" height="9.3" fill="none" stroke="#5a5a5a" stroke-width="1"/>
 <rect x="1482.5" y="357" width="9" height="6" fill="#f0f0f0"/><rect x="1485.5" y="361" width="11" height="7" fill="#f0f0f0"/>
 <rect x="1482.5" y="355" width="11" height="1.8" fill="#111"/>
 <path d="M1488 357.5 L1495 364.5 M1495 361 L1495 364.5 L1491.5 364.5" stroke="#111" stroke-width="1.4" fill="none"/>
 <rect x="1502.5" y="356.5" width="15" height="12.5" fill="#f0f0f0"/><rect x="1502.5" y="354.5" width="15" height="2" fill="#111"/>
 <path d="M1505 358.5 L1515 367.5 M1505 358.5 L1508.5 358.5 M1505 358.5 L1505 362 M1515 367.5 L1511.5 367.5 M1515 367.5 L1515 364" stroke="#111" stroke-width="1.4" fill="none"/>
 <path d="M1430.5 386 C1431 381 1428 377.5 1425 377.5 C1421.5 377.5 1419.5 380.5 1419.8 383.5" stroke="#111" stroke-width="2.2" fill="none"/>
 <path d="M1417 382 L1423 382 L1420 387 Z" fill="#111"/>
 <path d="M1439.5 386 C1439 381 1442 377.5 1445 377.5 C1448.5 377.5 1450.5 380.5 1450.2 383.5" stroke="#111" stroke-width="2.2" fill="none"/>
 <path d="M1447 382 L1453 382 L1450 387 Z" fill="#111"/>
 <g stroke="#5a5a5c" stroke-width="1.2"><path d="M1466 375.5 L1466 378.5 M1466 385.5 L1466 388.5 M1459.5 382 L1462.5 382 M1469.5 382 L1472.5 382 M1461.5 377.5 L1463.5 379.5 M1468.5 384.5 L1470.5 386.5 M1470.5 377.5 L1468.5 379.5 M1463.5 384.5 L1461.5 386.5"/></g>
 <path d="M1482.5 383 C1482.5 378 1486 376 1489 376 C1492.5 376 1495 378.5 1495 381" stroke="#111" stroke-width="1.8" fill="none"/>
 <path d="M1483 384 L1488 387.5 L1483 391 Z" fill="#f0f0f0"/><path d="M1496 384 L1491 387.5 L1496 391 Z" fill="#111"/>
 <path d="M1489.5 380 L1489.5 392" stroke="#111" stroke-width="1" stroke-dasharray="1.5 1"/>
 <path d="M1509 389 C1504 389 1503 385 1503.5 382 C1504 379 1507 377 1510 377.5" stroke="#111" stroke-width="1.8" fill="none"/>
 <path d="M1511.5 376 L1519 376 L1515.2 381 Z" fill="#111"/><path d="M1511.5 392 L1519 392 L1515.2 387 Z" fill="#f0f0f0"/>
 <path d="M1508 384 L1519 384" stroke="#111" stroke-width="1" stroke-dasharray="1.5 1"/>
</g>
<!-- layer property tab icons -->
<rect x="1319.5" y="409" width="14" height="4" fill="#000"/><path d="M1319.5 413.5 L1334.5 413.5" stroke="#eee" stroke-width="1"/>
<path d="M1321 404 L1325.5 410 L1337 398" stroke="#d0202a" stroke-width="2.2" fill="none"/>
<g stroke="#a8a8aa" stroke-width="1" fill="none"><path d="M1416 401 C1420 399 1424 401 1428 400 M1415 404 C1419 402 1424 404 1429 403 M1416 407 C1420 405 1424 407 1428 406"/></g>
<rect x="1423" y="405" width="6" height="5" fill="#bbb"/>
<path d="M1447.5 401 L1451.5 401 L1451.5 404 L1455 410.5 L1444 410.5 L1447.5 404 Z" fill="#b0b0b2"/>
<!-- effect buttons -->
<circle cx="1431.6" cy="442.8" r="7.3" fill="#fff"/><circle cx="1431.6" cy="442.8" r="4.6" fill="#1c1c1c"/>
<g fill="#111">
 <rect x="1448" y="435" width="16" height="16" fill="#e8e8e8"/>
 <path d="M1448 435h2v2h-2zM1452 435h2v2h-2zM1456 435h2v2h-2zM1460 435h2v2h-2zM1450 437h2v2h-2zM1454 437h2v2h-2zM1458 437h2v2h-2zM1462 437h2v2h-2zM1448 439h2v2h-2zM1452 439h2v2h-2zM1456 439h2v2h-2zM1460 439h2v2h-2zM1450 441h2v2h-2zM1454 441h2v2h-2zM1458 441h2v2h-2zM1462 441h2v2h-2zM1448 443h2v2h-2zM1452 443h2v2h-2zM1456 443h2v2h-2zM1460 443h2v2h-2zM1450 445h2v2h-2zM1454 445h2v2h-2zM1458 445h2v2h-2zM1462 445h2v2h-2zM1448 447h2v2h-2zM1452 447h2v2h-2zM1456 447h2v2h-2zM1460 447h2v2h-2zM1450 449h2v2h-2zM1454 449h2v2h-2zM1458 449h2v2h-2zM1462 449h2v2h-2z"/>
</g>
<rect x="1476" y="439" width="9.5" height="11" fill="#fff"/>
<rect x="1472.5" y="435.5" width="10.5" height="11" fill="#5ab4f0" stroke="#2a6a9a" stroke-width="0.8"/>
<path d="M1493 440.5 L1502 440.5 L1497.5 445 Z" fill="#333"/>
<path d="M1440 481 L1451 481 L1445.5 486 Z" fill="#333"/>
<!-- layer tab icons -->
<g fill="none" stroke="#111" stroke-width="1.1">
 <path d="M1322 595 L1330 593 L1338 595 L1330 597 Z" fill="#f0f0f0"/><path d="M1322 599 L1330 597 L1338 599 L1330 601 Z" fill="#f0f0f0"/><path d="M1322 603 L1330 601 L1338 603 L1330 605 Z" fill="#f0f0f0"/>
</g>
<g stroke="#9a9a9c" stroke-width="1.2" fill="none"><path d="M1377 600 L1381 597 M1380 601 L1385 597 M1383 602 L1389 597"/></g>
<rect x="1455" y="590.5" width="19" height="13" fill="#a8a8aa"/>
<path d="M1459 600 C1458 596 1462 593 1466 595 C1470 593 1473 597 1471 600 C1469 603 1465 603 1463 601" stroke="#151515" stroke-width="2" fill="none"/>
<path d="M1464 592 L1468 595 L1464 597" fill="#151515"/>
<!-- blend arrow, opacity arrows -->
<path d="M1396.5 618 L1405.8 618 L1401.2 622.8 Z" fill="#333"/>
<path d="M1510.5 618 L1519.5 618 L1515 613 Z M1510.5 621.5 L1519.5 621.5 L1515 626.5 Z" fill="#222"/>
<g fill="#c4c4c4"><rect x="1417" y="616" width="3" height="3"/><rect x="1423" y="616" width="3" height="3"/><rect x="1429" y="616" width="3" height="3"/><rect x="1435" y="616" width="3" height="3"/><rect x="1441" y="616" width="3" height="3"/><rect x="1420" y="619" width="3" height="3"/><rect x="1426" y="619" width="3" height="3"/><rect x="1432" y="619" width="3" height="3"/><rect x="1438" y="619" width="3" height="3"/><rect x="1444" y="619" width="3" height="3"/></g>
<path d="M1321 639 L1330 639 L1325.5 643.5 Z" fill="#333"/>
<!-- row2 icons -->
<ellipse cx="1366" cy="641" rx="7" ry="5" fill="#6a6a6a" stroke="#222" stroke-width="1"/><ellipse cx="1366" cy="640.5" rx="5.5" ry="2" fill="#111"/>
<path d="M1385.5 635 L1388 635 L1389.5 649 L1384 649 Z" fill="#e8e8e8" stroke="#222" stroke-width="0.8"/><rect x="1385" y="633" width="3.5" height="2.5" fill="#222"/>
<path d="M1402 633 L1408 633 L1408 643 L1405 649 L1402 643 Z" fill="#4aa0e0"/><path d="M1402 640 L1408 640 L1408 643 L1405 649 L1402 643 Z" fill="#d8c838"/>
<rect x="1419.5" y="639.5" width="12" height="9" fill="#1c1c1c"/><path d="M1422 640 L1422 636 C1422 632.5 1429 632.5 1429 636 L1429 640" stroke="#1c1c1c" stroke-width="1.8" fill="none"/><rect x="1425" y="642" width="1.5" height="4" fill="#ddd"/>
<rect x="1437" y="638" width="8" height="6" fill="#111"/><path d="M1438.5 638 L1438.5 635.5 C1438.5 633 1443.5 633 1443.5 635.5 L1443.5 638" stroke="#111" stroke-width="1.3" fill="none"/>
<rect x="1446" y="643" width="8" height="6" fill="#f0f0f0"/><rect x="1450" y="639" width="5" height="4" fill="#f0f0f0"/>
<rect x="1457.5" y="631.5" width="30" height="19" fill="none" stroke="#858588" stroke-width="1" rx="2"/>
<rect x="1490.5" y="631.5" width="30" height="19" fill="none" stroke="#858588" stroke-width="1" rx="2"/>
<g stroke="#68686b" stroke-width="1.4" fill="none"><path d="M1462 645 L1470 637 M1472 644 L1477 649 M1477 644 L1472 649 M1493 648 L1506 635 M1493 637 L1503 637 M1505 644 L1510 649 M1510 644 L1505 649"/></g>
<path d="M1477.5 638 L1485 638 L1481.3 642 Z M1510.5 638 L1518 638 L1514.3 642 Z" fill="#68686b"/>
<!-- row3 icons -->
<g fill="none" stroke="#111" stroke-width="1.1">
 <path d="M1300 659 L1308 657 L1316 659 L1308 661 Z" fill="#f0f0f0"/><path d="M1300 663 L1308 661 L1316 663 L1308 665 Z" fill="#f0f0f0"/><path d="M1300 667 L1308 665 L1316 667 L1308 669 Z" fill="#f0f0f0"/>
</g>
<path d="M1366.5 656.5 L1378.5 656.5 L1378.5 667 L1374.5 671 L1366.5 671 Z" fill="#fafafa" stroke="#111" stroke-width="1"/>
<path d="M1385 656.5 L1395 656.5 L1395 671 L1385 671 Z" fill="#fafafa" stroke="#111" stroke-width="1"/>
<rect x="1393" y="665" width="6" height="6" fill="#ddd" stroke="#111" stroke-width="0.8"/>
<path d="M1403.5 658 L1408 658 L1409 659 L1413 659 L1413 669 L1403.5 669 Z" fill="#bbb" stroke="#111" stroke-width="0.9"/>
<rect x="1411" y="662" width="8" height="9.5" fill="#fafafa" stroke="#111" stroke-width="0.9"/>
<path d="M1428 657 L1436 657 L1436 662 L1439 662 L1432 669 L1425 662 L1428 662 Z" fill="none" stroke="#8e8e90" stroke-width="1"/>
<path d="M1426 667 L1432 671.5 L1438 667" stroke="#8e8e90" stroke-width="1" fill="none"/>
<path d="M1444 659.5 L1452 655.5 L1460 659.5 L1452 663.5 Z" fill="#111"/>
<path d="M1449.5 657 L1454.5 657 L1454.5 662 L1457.5 662 L1452 667.5 L1446.5 662 L1449.5 662 Z" fill="#fff" stroke="#111" stroke-width="0.9"/>
<path d="M1445 668 L1452 672 L1459 668" stroke="#111" stroke-width="1.5" fill="#fff"/>
<rect x="1464.5" y="658.5" width="16" height="11" fill="#3a3a3a" stroke="#111" stroke-width="0.8"/>
<circle cx="1472.5" cy="664" r="3.5" fill="#f4f4f4"/>
<path d="M1489 658 L1489 671 M1487 668 L1489 671 L1491 668" stroke="#8e8e90" stroke-width="1.1" fill="none"/>
<path d="M1492 660 C1497 658 1498 663 1493 666" stroke="#8e8e90" stroke-width="1.4" fill="none"/>
<path d="M1506 661 L1516 661 L1514.5 671 L1507.5 671 Z" fill="#f0f0f0" stroke="#111" stroke-width="1"/>
<path d="M1505.5 660.5 C1506 655.5 1516 655.5 1516.5 660.5" stroke="#111" stroke-width="1.2" fill="none"/>
<path d="M1509 663 L1509.5 669.5 M1511 663 L1511 669.5 M1513 663 L1512.5 669.5" stroke="#999" stroke-width="0.7"/>
<!-- eyes & pen -->
<use href="#eye" transform="translate(1310 698.5)"/>
<use href="#eye" transform="translate(1310 738.7)"/>
<path d="M1322.5 704 C1326 701 1329.5 698 1333 694.5 L1334.5 696 C1332 700.5 1328 703.5 1323.5 704.8 Z" fill="#fafafa" stroke="#111" stroke-width="0.9"/>
<path d="M1332.5 694 L1335 691.5" stroke="#111" stroke-width="1.8"/>
<!-- paper page icon -->
<path d="M1390 724 L1398.5 724 L1403 728.5 L1403 738 L1390 738 Z" fill="#fff" stroke="#111" stroke-width="1"/>
<path d="M1398.5 724 L1398.5 728.5 L1403 728.5" stroke="#111" stroke-width="0.9" fill="none"/>
</svg>

<svg class="a" style="left:0;top:0" width="1526" height="1036" viewBox="0 0 1526 1036">
<path d="M8 1012 L95 1012 L28 1021.5 L8 1021.5 Z" fill="#7a7a7c"/>
<rect x="61" y="1011" width="4" height="11" fill="#6e6e70"/>
<text x="9" y="1021.5" font-size="11.8" fill="#fff" font-family="Liberation Sans" transform="translate(9 0) scale(0.9 1) translate(-9 0)">90.6</text>
<circle cx="115.5" cy="1015.5" r="4" fill="#fff" stroke="#111" stroke-width="1.2"/><rect x="113.2" y="1015" width="4.6" height="1.3" fill="#111"/><path d="M118.2 1018.3 L120.5 1020.5" stroke="#111" stroke-width="1.6"/>
<circle cx="135.5" cy="1015.5" r="4" fill="#fff" stroke="#111" stroke-width="1.2"/><path d="M133.2 1015.6 L137.8 1015.6 M135.5 1013.3 L135.5 1017.9" stroke="#111" stroke-width="1.4"/><path d="M138.2 1018.3 L140.5 1020.5" stroke="#111" stroke-width="1.6"/>
<path d="M168 1011.5 L215 1011.5 C210 1016 205 1020 190 1021.5 L186 1021.5 Z" fill="#7a7a7c"/>
<path d="M245 1011.5 L264 1011.5 L264 1021.5 Z" fill="#7a7a7c"/>
<rect x="215" y="1011" width="3.5" height="11" fill="#6e6e70"/>
<text x="172" y="1021.5" font-size="11.8" fill="#fff" font-family="Liberation Sans" transform="translate(172 0) scale(0.9 1) translate(-172 0)">0.0</text>
<path d="M281 1020.5 C281.5 1016 279.5 1012.5 276.5 1012.5 C273.5 1012.5 271.5 1015 271.8 1017" stroke="#111" stroke-width="1.8" fill="none"/><path d="M269.5 1016 L274.5 1016 L272 1020.5 Z" fill="#111"/>
<path d="M290 1020.5 C289.5 1016 291.5 1012.5 294.5 1012.5 C297.5 1012.5 299.5 1015 299.2 1017" stroke="#111" stroke-width="1.8" fill="none"/><path d="M296.5 1016 L301.5 1016 L299 1020.5 Z" fill="#111"/>
<g stroke="#5e5e60" stroke-width="1"><path d="M316 1010.5 L316 1013 M316 1018.5 L316 1021 M310.5 1015.8 L313 1015.8 M319 1015.8 L321.5 1015.8 M312.3 1012 L314 1013.7 M318 1017.8 L319.7 1019.5 M319.7 1012 L318 1013.7 M314 1017.8 L312.3 1019.5"/></g>
<path d="M333.5 1013 L330 1016 L333.5 1019 Z" fill="#333"/>
<path d="M1234 1013 L1237.5 1016 L1234 1019 Z" fill="#333"/>
<path d="M1246.5 81.5 L1252 81.5 L1249.2 84.5 Z" fill="#333"/>
<path d="M1246.5 104 L1252 104 L1249.2 101 Z" fill="#333"/>
<path d="M1246.5 1001 L1252 1001 L1249.2 1004 Z" fill="#333"/>
<g fill="#3e3e40"><rect x="1246" y="549" width="5" height="1.2"/><rect x="1246" y="552" width="5" height="1.2"/><rect x="1246" y="555" width="5" height="1.2"/></g>
<g fill="#3e3e40"><rect x="813.5" y="1013" width="1.2" height="6"/><rect x="816.5" y="1013" width="1.2" height="6"/><rect x="819.5" y="1013" width="1.2" height="6"/></g>
<path d="M10 1031 L16 1026.5 L22 1031 M10 1035 L16 1030.5 L22 1035" stroke="#8e8e90" stroke-width="1.6" fill="none"/>
</svg>

<svg class="a" style="left:0;top:0" width="1526" height="1036" viewBox="0 0 1526 1036">
<g fill="#98989a">
 <path d="M1266.8 51.5 L1261.3 58 L1266.8 64 L1268.3 62.5 L1264 58 L1268.3 53 Z"/>
 <path d="M1284 51.5 L1289 58 L1284 64 L1282.6 62.5 L1286.5 58 L1282.6 53 Z"/>
 <path d="M1289 51.5 L1294 58 L1289 64 L1287.6 62.5 L1291.5 58 L1287.6 53 Z"/>
 <path d="M1493.5 51.5 L1498.5 58 L1493.5 64 L1492 62.5 L1496 58 L1492 53 Z"/>
 <path d="M1515 51.5 L1520 58 L1515 64 L1513.6 62.5 L1517.5 58 L1513.6 53 Z"/>
 <path d="M1520 51.5 L1525 58 L1520 64 L1518.6 62.5 L1522.5 58 L1518.6 53 Z"/>
</g>
<g><rect x="1299" y="53.5" width="1.2" height="9" fill="#8e8e90"/><rect x="1302" y="53.5" width="1.2" height="9" fill="#8e8e90"/><rect x="1305" y="53.5" width="1.2" height="9" fill="#8e8e90"/>
<rect x="1300.2" y="53.5" width="1" height="9" fill="#333"/><rect x="1303.2" y="53.5" width="1" height="9" fill="#333"/></g>
<rect x="1295.5" y="48" width="1" height="20" fill="#333"/>
</svg>
</body></html>
